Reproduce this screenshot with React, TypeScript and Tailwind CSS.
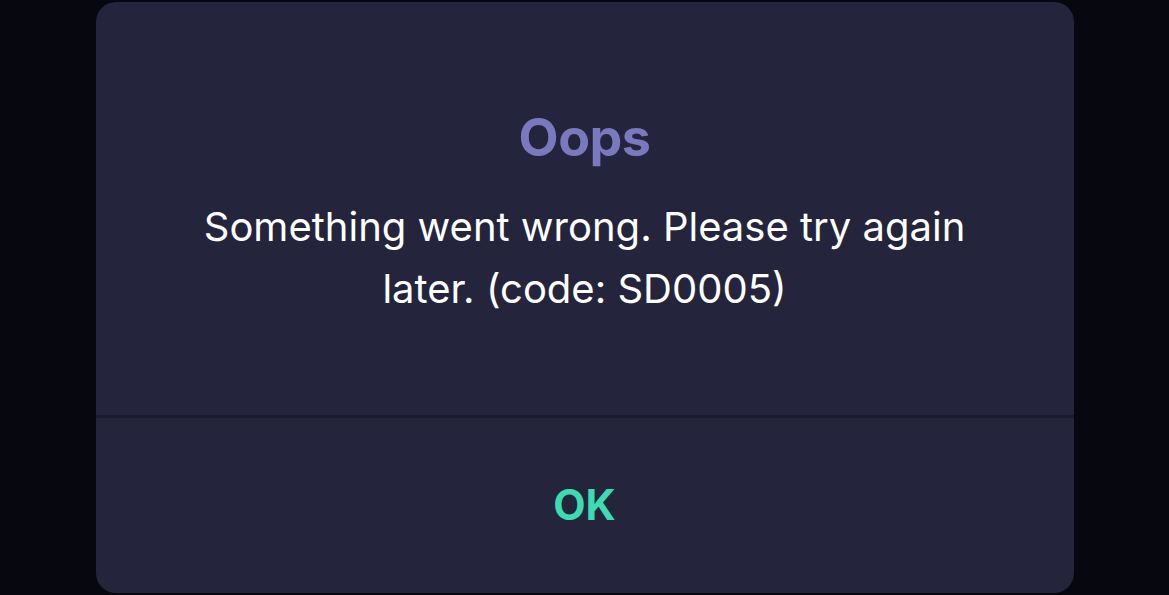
export default function App() {
  return (
    <div className="h-[595px] w-full bg-[#07070f] flex justify-center pt-[2px] overflow-hidden" style={{ fontFamily: "Inter, 'Open Sans', sans-serif" }}>
      <div className="w-[978px] h-[591px] rounded-[20px] bg-[#24243c] flex flex-col">
        <div className="h-[413px] flex flex-col items-center pt-[106px] px-[100px]">
          <h1 className="text-[52px] leading-[60px] font-bold text-[#7a78bf] tracking-[-0.5px]">Oops</h1>
          <p className="mt-[28px] text-[40px] leading-[62px] text-white text-center">
            Something went wrong. Please try again later. (code: SD0005)
          </p>
        </div>
        <div className="h-[3px] bg-[#1b1b2f]" />
        <button className="flex-1 flex items-center justify-center text-[42px] font-bold text-[#3ddbb2] pb-[2px]">
          OK
        </button>
      </div>
    </div>
  )
}
